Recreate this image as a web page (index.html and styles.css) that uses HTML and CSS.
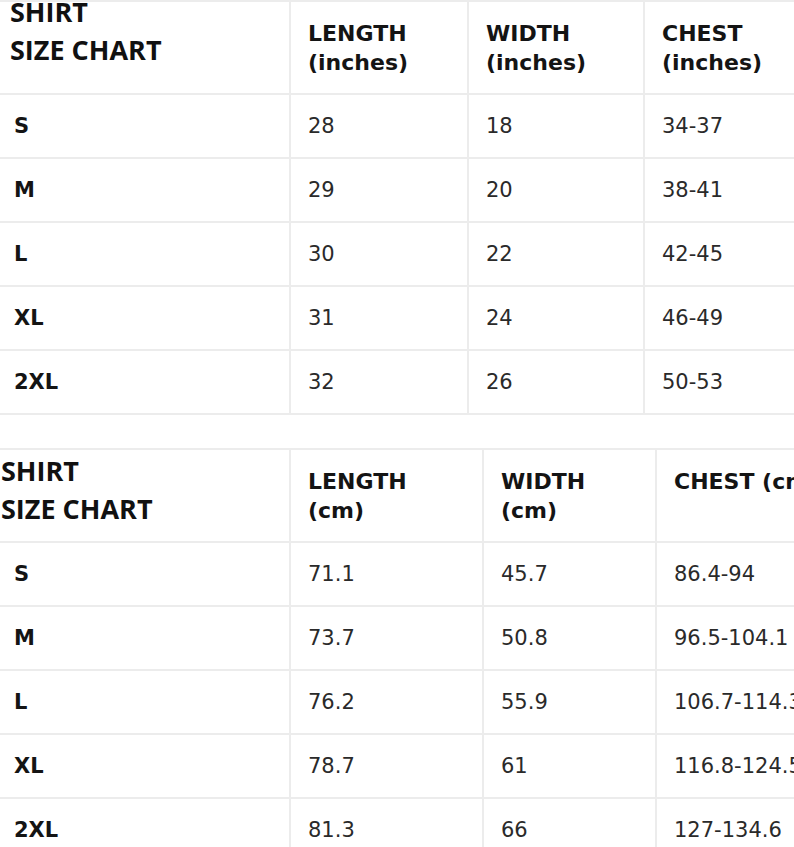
FILE: index.html
```html
<!DOCTYPE html>
<html>
<head>
<meta charset="utf-8">
<link rel="stylesheet" href="styles.css">
</head>
<body>
<div class="page">
  <table class="chart chart-in">
    <colgroup>
      <col class="c1"><col class="c2"><col class="c3"><col class="c4">
    </colgroup>
    <thead>
      <tr class="head">
        <th class="title-cell"><div class="title title-in">SHIRT<br>SIZE CHART</div></th>
        <th>LENGTH<br>(inches)</th>
        <th>WIDTH<br>(inches)</th>
        <th>CHEST<br>(inches)</th>
      </tr>
    </thead>
    <tbody>
      <tr><td class="size">S</td><td>28</td><td>18</td><td>34-37</td></tr>
      <tr><td class="size">M</td><td>29</td><td>20</td><td>38-41</td></tr>
      <tr><td class="size">L</td><td>30</td><td>22</td><td>42-45</td></tr>
      <tr><td class="size">XL</td><td>31</td><td>24</td><td>46-49</td></tr>
      <tr><td class="size">2XL</td><td>32</td><td>26</td><td>50-53</td></tr>
    </tbody>
  </table>

  <table class="chart chart-cm">
    <colgroup>
      <col class="c1"><col class="c2"><col class="c3"><col class="c4">
    </colgroup>
    <thead>
      <tr class="head">
        <th class="title-cell"><div class="title title-cm">SHIRT<br>SIZE CHART</div></th>
        <th>LENGTH<br>(cm)</th>
        <th>WIDTH<br>(cm)</th>
        <th>CHEST (cm)</th>
      </tr>
    </thead>
    <tbody>
      <tr><td class="size">S</td><td>71.1</td><td>45.7</td><td>86.4-94</td></tr>
      <tr><td class="size">M</td><td>73.7</td><td>50.8</td><td>96.5-104.1</td></tr>
      <tr><td class="size">L</td><td>76.2</td><td>55.9</td><td>106.7-114.3</td></tr>
      <tr><td class="size">XL</td><td>78.7</td><td>61</td><td>116.8-124.5</td></tr>
      <tr><td class="size">2XL</td><td>81.3</td><td>66</td><td>127-134.6</td></tr>
    </tbody>
  </table>
</div>
</body>
</html>
```

FILE: styles.css
```css
html, body {
  margin: 0;
  padding: 0;
  background: #ffffff;
}
body {
  width: 794px;
  height: 847px;
  overflow: hidden;
}
.page {
  width: 794px;
  height: 847px;
  overflow: hidden;
}
.chart {
  border-collapse: collapse;
  table-layout: fixed;
  font-family: "DejaVu Sans", sans-serif;
  font-size: 21px;
  color: #2a2a2a;
  white-space: nowrap;
}
.chart-in {
  width: 860px;
  margin-top: 0;
}
.chart-cm {
  width: 860px;
  margin-top: 33px;
}
.chart-in .c1 { width: 290px; }
.chart-in .c2 { width: 178px; }
.chart-in .c3 { width: 176px; }
.chart-in .c4 { width: 216px; }
.chart-cm .c1 { width: 290px; }
.chart-cm .c2 { width: 193px; }
.chart-cm .c3 { width: 173px; }
.chart-cm .c4 { width: 204px; }

.chart th, .chart td {
  border: 2px solid #ececec;
  padding: 0 0 0 17px;
  text-align: left;
}
.chart tr > :first-child {
  border-left: none;
}
.chart th {
  height: 74px;
  vertical-align: top;
  padding-top: 17px;
  font-size: 22px;
  font-weight: bold;
  line-height: 29px;
  color: #141414;
  overflow: hidden;
}
.chart td {
  height: 62px;
  vertical-align: middle;
  line-height: 24px;
}
.chart td.size {
  font-weight: bold;
  color: #141414;
  padding-left: 14px;
}
.chart th.title-cell {
  padding: 0;
  height: 91px;
}
.title {
  font-family: "Open Sans", sans-serif;
  font-weight: 700;
  font-size: 27px;
  line-height: 38px;
  color: #111111;
}
.title-in {
  margin-top: -9px;
  margin-left: 10px;
}
.title-cm {
  margin-top: 2px;
  margin-left: 1px;
}
```
